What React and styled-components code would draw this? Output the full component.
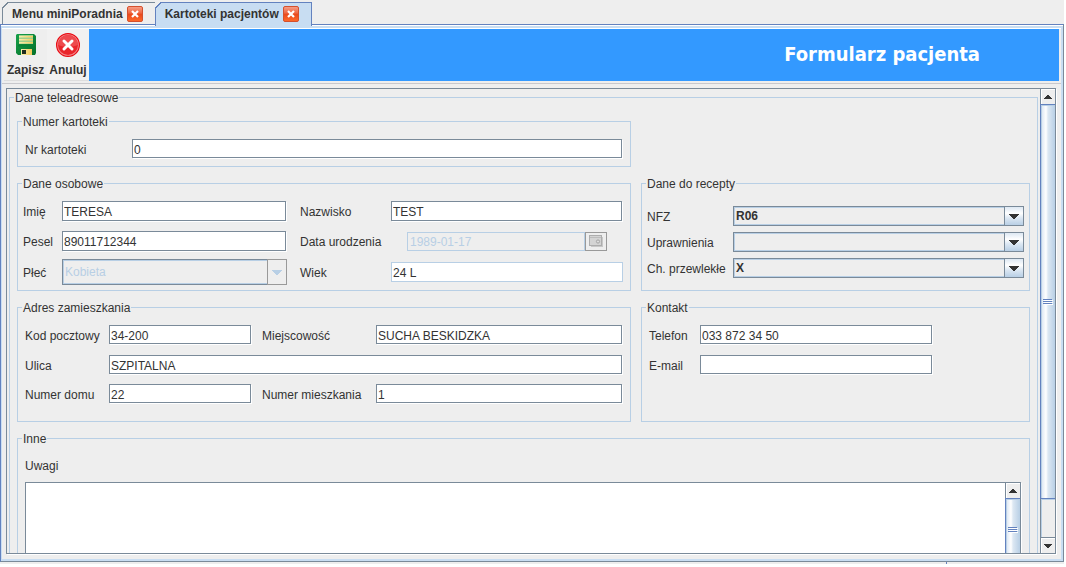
import React from "react";
import styled, { createGlobalStyle, css } from "styled-components";

const c = {
  bg: "#eeeeee",
  text: "#333333",
  shadow: "#7a8a99",
  primary: "#6382bf",
  soft: "#b8cfe5",
  selected: "#c8ddf2",
};

const GlobalStyle = createGlobalStyle`
  * { box-sizing: border-box; }
  body {
    margin: 0;
    background: #fff;
    color: ${c.text};
    font: 12px/15px "Liberation Sans", Arial, sans-serif;
  }
  button, input, select, textarea { font: inherit; color: inherit; margin: 0; border-radius: 0; outline: none; }
`;

const Page = styled.div`
  height: 100vh;
  padding: 0 2px 3px 0;
`;

const Window = styled.div`
  height: 100%;
  display: flex;
  flex-direction: column;
  background: ${c.bg};
`;

/* Tabs */
const TabBar = styled.nav`
  display: flex;
  height: 24px;
  padding: 2px 2px 0;
`;

const Tab = styled.div`
  --line: ${(p) => (p.$active ? c.primary : c.shadow)};
  --fill: ${(p) => (p.$active ? c.selected : c.bg)};
  position: relative;
  display: flex;
  align-items: center;
  gap: 4px;
  height: ${(p) => (p.$active ? 24 : 22)}px;
  padding: 1px 12px ${(p) => (p.$active ? 2 : 0)}px 9px;
  border: 1px solid var(--line);
  border-bottom: 0;
  border-right-color: ${c.primary};
  border-right-width: ${(p) => (p.$active ? 1 : 0)}px;
  background: var(--fill);
  z-index: ${(p) => (p.$active ? 1 : 0)};

  &::before {
    content: "";
    position: absolute;
    top: -1px;
    left: -1px;
    width: 7px;
    height: 7px;
    background: linear-gradient(135deg, ${c.bg} 0 4px, var(--line) 4px 5px, var(--fill) 5px);
  }
`;

const TabName = styled.button`
  padding: 0;
  border: 0;
  background: none;
  font-weight: bold;
  white-space: nowrap;
`;

const CloseButton = styled.button`
  display: flex;
  width: 16px;
  height: 16px;
  padding: 0;
  border: 0;
  background: none;
`;

/* Frame */
const Frame = styled.main`
  flex: 1;
  min-height: 0;
  display: flex;
  border: 1px solid ${c.shadow};
  border-top-color: ${c.primary};
  border-left-color: ${c.primary};
  padding-top: 1px;
  background: #fff;
`;

const Pane = styled.div`
  flex: 1;
  min-width: 0;
  display: flex;
  flex-direction: column;
  border: 2px solid ${c.selected};
  border-left-width: 1px;
  background: ${c.bg};
`;

const Toolbar = styled.header`
  display: flex;
  height: 56px;
  padding: 0 2px 2px;
  border-top: 1px solid #fff;
  border-bottom: 1px solid #c8c8cc;
`;

const ToolButton = styled.button`
  display: flex;
  flex-direction: column;
  align-items: center;
  justify-content: space-between;
  padding: 4px ${(p) => (p.$light ? 2 : 3)}px 2px;
  border: 0;
  border-bottom: 1px solid #dddddd;
  background: ${(p) => (p.$light ? "#f1f1f1" : c.bg)};
  font-weight: bold;
`;

const Banner = styled.h1`
  flex: 1;
  margin: 0;
  padding-right: 79px;
  background: #3399ff;
  color: #fff;
  font: bold 20px/50px "DejaVu Sans Condensed", "DejaVu Sans", sans-serif;
  text-align: right;
`;

/* Scrolling */
const ScrollPane = styled.div`
  flex: 1;
  min-height: 0;
  display: flex;
  margin: 4px 5px 5px 4px;
  border: 1px solid ${c.shadow};
  box-shadow: 1px 1px 0 #fff;
`;

const Viewport = styled.div`
  flex: 1;
  min-width: 0;
  padding: 1px 2px;
  overflow-y: auto;
  scrollbar-width: none;
`;

const Bar = styled.div`
  display: flex;
  flex-direction: column;
  width: 15px;
  border-left: 1px solid ${c.shadow};
`;

const BarButton = styled.button`
  display: flex;
  align-items: center;
  justify-content: center;
  height: ${(p) => (p.$down ? 16 : 15)}px;
  padding: 0;
  border: 0;
  ${(p) => p.$down && css`border-top: 1px solid ${c.shadow};`}
  background: ${c.bg};
  box-shadow: inset 1px 1px 0 #fff;
`;

const Thumb = styled.div`
  flex: ${(p) => p.$size};
  display: flex;
  align-items: center;
  justify-content: center;
  margin-left: -1px;
  border: solid ${c.primary};
  border-width: 1px 0 1px 1px;
  background: linear-gradient(90deg, ${c.soft} 0 1px, #dfe9f4 1px, #fff 5px, #dde8f3 7px, ${c.soft} 100%);
  box-shadow: inset 0 1px 0 ${c.soft};
`;

const Track = styled.div`
  flex: ${(p) => p.$size};
  box-shadow: inset 1px 1px 0 ${c.soft};
`;

/* Groups */
const Group = styled.fieldset`
  min-width: 0;
  margin: 0;
  padding: 0 4px;
  border: 1px solid ${c.soft};
`;

const Legend = styled.legend`
  height: 15px;
  padding: 0 1px;
  line-height: 17px;
`;

const Sections = styled.div`
  display: grid;
  grid-template-columns: minmax(0, 614fr) minmax(0, 389fr);
  grid-template-rows: 53px 115px 122px auto;
  gap: 9px 10px;
  padding: 9px 3px 8px;

  > :first-child { grid-column: 1; }
  > :nth-child(2) { grid-column: 1; }
  > :last-child { grid-column: 1 / -1; }
`;

const Fields = styled.div`
  display: grid;
  align-items: center;
  grid-template-columns: ${(p) => p.$cols};
  grid-template-rows: ${(p) => p.$rows};
  padding: ${(p) => p.$pad};
`;

const Label = styled.label`
  padding-top: 2px;
  padding-left: ${(p) => p.$indent || 0}px;
  white-space: nowrap;
`;

const Input = styled.input`
  width: calc(100% - 1px);
  min-width: 0;
  height: ${(p) => (p.$tall ? 20 : 19)}px;
  margin-bottom: ${(p) => (p.$tall ? 0 : 1)}px;
  padding: ${(p) => (p.$tall ? 1 : 2)}px 1px 0;
  border: 1px solid ${c.shadow};
  background: #fff;
  box-shadow: 1px 1px 0 #fff;
  grid-column: ${(p) => (p.$wide ? "2 / -1" : "auto")};

  &:read-only {
    width: 100%;
    border-color: ${c.soft};
    box-shadow: none;
  }
  &:disabled {
    flex: 1;
    margin-bottom: 0;
    padding-left: 2px;
    background: ${c.bg};
    color: ${c.soft};
  }
`;

const DateBox = styled.div`
  display: flex;
  padding: 0 16px;
`;

const DateButton = styled.button`
  display: flex;
  align-items: center;
  justify-content: center;
  width: 22px;
  height: 19px;
  padding: 0;
  border: 1px solid #999999;
  background: ${c.bg};
`;

const ComboBox = styled.div`
  position: relative;
  display: flex;
  height: ${(p) => (p.$tall ? 26 : 20)}px;
`;

const Select = styled.select`
  appearance: none;
  width: 100%;
  padding: 0 22px 0 2px;
  border: 1px solid ${c.shadow};
  background: ${c.bg};
  box-shadow: inset 0 0 0 1px ${c.soft};
  font-weight: bold;

  &:disabled {
    opacity: 1;
    color: ${c.soft};
    font-weight: normal;
  }
`;

const ComboArrow = styled.span`
  position: absolute;
  inset: 0 0 0 auto;
  width: 20px;
  display: flex;
  align-items: center;
  justify-content: center;
  pointer-events: none;
  border: 1px solid ${(p) => (p.$off ? "#999999" : c.shadow)};
  color: ${(p) => (p.$off ? c.soft : c.text)};
  background: ${(p) => (p.$off ? c.bg : `linear-gradient(#dde8f3, #fff 35%, #dde8f3 60%, ${c.soft})`)};
`;

const Notes = styled.div`
  display: flex;
  flex-direction: column;
  gap: 8px;
  padding: 11px 4px 8px 3px;
`;

const NotesPane = styled.div`
  display: flex;
  height: 96px;
  border: 1px solid ${c.shadow};
  box-shadow: 1px 1px 0 #fff;
`;

const NotesArea = styled.textarea`
  flex: 1;
  min-width: 0;
  padding: 1px;
  border: 0;
  resize: none;
  overflow: hidden;
  background: #fff;
`;

const BottomStrip = styled.footer`
  display: grid;
  grid-template-columns: 947fr 117fr;
  height: 2px;

  > :first-child { border-right: 1px solid ${c.primary}; }
`;

/* Icons */
const Triangle = ({ up, size = 8 }) => (
  <svg width={size} height={size / 2} viewBox="0 0 8 4" shapeRendering="crispEdges" aria-hidden="true">
    <path d={up ? "M3 0h2v1h1v1h1v1h1v1H0V3h1V2h1V1h1z" : "M0 0h8v1H7v1H6v1H5v1H3V3H2V2H1V1H0z"} fill="currentColor" />
  </svg>
);

const ComboTriangle = () => (
  <svg width="10" height="5" viewBox="0 0 10 5" shapeRendering="crispEdges" aria-hidden="true">
    <path d="M0 0h10v1H9v1H8v1H7v1H6v1H4V4H3V3H2V2H1V1H0z" fill="currentColor" />
  </svg>
);

const Grip = () => (
  <svg width="10" height="6" viewBox="0 0 10 6" shapeRendering="crispEdges" aria-hidden="true">
    <path d="M1 1h9v1H1zM1 3h9v1H1zM1 5h9v1H1z" fill="#fff" />
    <path d="M0 0h9v1H0zM0 2h9v1H0zM0 4h9v1H0z" fill={c.primary} />
  </svg>
);

const CloseIcon = () => (
  <svg width="16" height="16" viewBox="0 0 16 16" aria-hidden="true">
    <defs>
      <linearGradient id="closeFill" x1="0" y1="0" x2="0" y2="1">
        <stop offset="0" stopColor="#f7a189" />
        <stop offset="0.45" stopColor="#ee6440" />
        <stop offset="0.5" stopColor="#e8481c" />
        <stop offset="1" stopColor="#ff6a2a" />
      </linearGradient>
    </defs>
    <rect x="0.5" y="0.5" width="15" height="15" rx="1.5" fill="url(#closeFill)" stroke="#d4502e" />
    <path d="M5 5l6 6M11 5l-6 6" stroke="#fff" strokeWidth="2.2" />
  </svg>
);

const SaveIcon = () => (
  <svg width="22" height="24" viewBox="0 0 22 24" aria-hidden="true">
    <defs>
      <linearGradient id="saveFill" x1="0" y1="0" x2="1" y2="1">
        <stop offset="0" stopColor="#17a04a" />
        <stop offset="1" stopColor="#05702a" />
      </linearGradient>
      <linearGradient id="savePaper" x1="0" y1="0" x2="1" y2="0">
        <stop offset="0" stopColor="#f7f0b0" />
        <stop offset="1" stopColor="#f4c95a" />
      </linearGradient>
    </defs>
    <path d="M2 1h17l2 2v17l-1 2H3l-2-2V2z" fill="url(#saveFill)" />
    <path d="M4 2h14v9H4z" fill="#9ed08c" />
    <path d="M4 3h14v1.5H4zM4 6h14v1.5H4zM4 9h14v1.5H4z" fill="url(#savePaper)" />
    <path d="M3 11.5h16v2H3z" fill="#078237" />
    <path d="M6 16h11v6H6z" fill="url(#savePaper)" />
    <path d="M7 17h4v4H7z" fill="#1d2d20" />
  </svg>
);

const CancelIcon = () => (
  <svg width="24" height="24" viewBox="0 0 24 24" aria-hidden="true">
    <circle cx="12" cy="12" r="11.4" fill="#f58a8d" stroke="#e80b12" strokeWidth="1.2" />
    <circle cx="12" cy="12" r="10" fill="#e9252b" />
    <path d="M2 12a10 10 0 0 1 20 0q-10 4-20 0z" fill="#ee4a4e" />
    <path d="M8 8l8 8M16 8l-8 8" stroke="#fff" strokeWidth="3" strokeLinecap="round" />
  </svg>
);

const CalendarIcon = () => (
  <svg width="14" height="12" viewBox="0 0 14 12" aria-hidden="true">
    <path d="M2 2h12v10H2z" fill="#c8c8c8" />
    <rect x="0.5" y="0.5" width="12" height="10" fill="#d4d4d4" stroke="#adadad" />
    <path d="M1 2.5h11" stroke="#bcbcbc" />
    <circle cx="9" cy="6.5" r="1.6" fill="#dedede" stroke="#a4a4a4" />
  </svg>
);

/* Composed parts */
function Scrollbar({ thumb, track }) {
  return (
    <Bar>
      <BarButton type="button" aria-label="W górę"><Triangle up /></BarButton>
      <Thumb $size={thumb}><Grip /></Thumb>
      {track > 0 && <Track $size={track} />}
      <BarButton type="button" $down aria-label="W dół"><Triangle /></BarButton>
    </Bar>
  );
}

function TextField({ id, label, value = "", indent, ...rest }) {
  return (
    <>
      <Label htmlFor={id} $indent={indent}>{label}</Label>
      <Input id={id} defaultValue={value} {...rest} />
    </>
  );
}

function Combo({ id, label, value, disabled, tall }) {
  return (
    <>
      <Label htmlFor={id}>{label}</Label>
      <ComboBox $tall={tall}>
        <Select id={id} disabled={disabled} defaultValue={value}>
          <option value={value}>{value}</option>
        </Select>
        <ComboArrow $off={disabled}><ComboTriangle /></ComboArrow>
      </ComboBox>
    </>
  );
}

function Section({ title, children }) {
  return (
    <Group>
      <Legend>{title}</Legend>
      {children}
    </Group>
  );
}

function TabItem({ name, active }) {
  return (
    <Tab $active={active}>
      <TabName type="button">{name}</TabName>
      <CloseButton type="button" aria-label={`Zamknij: ${name}`}><CloseIcon /></CloseButton>
    </Tab>
  );
}

export default function App() {
  return (
    <Page>
      <GlobalStyle />
      <Window>
        <TabBar>
          <TabItem name="Menu miniPoradnia" />
          <TabItem name="Kartoteki pacjentów" active />
        </TabBar>
        <Frame>
          <Pane>
            <Toolbar>
              <ToolButton type="button"><SaveIcon />Zapisz</ToolButton>
              <ToolButton type="button" $light><CancelIcon />Anuluj</ToolButton>
              <Banner>Formularz pacjenta</Banner>
            </Toolbar>
            <ScrollPane>
              <Viewport>
                <Section title="Dane teleadresowe">
                  <Sections>
                    <Section title="Numer kartoteki">
                      <Fields $cols="107px minmax(0, 1fr)" $rows="30px" $pad="5px 3px 0">
                        <TextField id="nr" label="Nr kartoteki" value="0" />
                      </Fields>
                    </Section>
                    <Section title="Dane osobowe">
                      <Fields
                        $cols="39px minmax(0, 225fr) 104px minmax(0, 232fr)"
                        $rows="30px 30px 32px"
                        $pad="5px 3px 0 1px"
                      >
                        <TextField id="imie" label="Imię" value="TERESA" $tall />
                        <TextField id="nazwisko" label="Nazwisko" value="TEST" indent={13} $tall />
                        <TextField id="pesel" label="Pesel" value="89011712344" $tall />
                        <Label htmlFor="data" $indent={13}>Data urodzenia</Label>
                        <DateBox>
                          <Input id="data" defaultValue="1989-01-17" disabled />
                          <DateButton type="button" disabled aria-label="Wybierz datę"><CalendarIcon /></DateButton>
                        </DateBox>
                        <Combo id="plec" label="Płeć" value="Kobieta" disabled tall />
                        <TextField id="wiek" label="Wiek" value="24 L" indent={13} readOnly $tall />
                      </Fields>
                    </Section>
                    <Section title="Dane do recepty">
                      <Fields $cols="86px minmax(0, 1fr)" $rows="26px 26px 26px" $pad="12px 1px 0">
                        <Combo id="nfz" label="NFZ" value="R06" />
                        <Combo id="uprawnienia" label="Uprawnienia" value="" />
                        <Combo id="przewlekle" label="Ch. przewlekłe" value="X" />
                      </Fields>
                    </Section>
                    <Section title="Adres zamieszkania">
                      <Fields
                        $cols="84px minmax(0, 143fr) 124px minmax(0, 247fr)"
                        $rows="30px 30px 28px"
                        $pad="5px 3px 0"
                      >
                        <TextField id="kod" label="Kod pocztowy" value="34-200" />
                        <TextField id="miejscowosc" label="Miejscowość" value="SUCHA BESKIDZKA" indent={10} />
                        <TextField id="ulica" label="Ulica" value="SZPITALNA" $wide />
                        <TextField id="dom" label="Numer domu" value="22" />
                        <TextField id="mieszkanie" label="Numer mieszkania" value="1" indent={10} />
                      </Fields>
                    </Section>
                    <Section title="Kontakt">
                      <Fields
                        $cols="51px minmax(0, 233fr) minmax(0, 92fr)"
                        $rows="30px 30px"
                        $pad="5px 0 0 3px"
                      >
                        <TextField id="telefon" label="Telefon" value="033 872 34 50" />
                        <span />
                        <TextField id="email" label="E-mail" type="email" />
                      </Fields>
                    </Section>
                    <Section title="Inne">
                      <Notes>
                        <Label htmlFor="uwagi">Uwagi</Label>
                        <NotesPane>
                          <NotesArea id="uwagi" />
                          <Scrollbar thumb={1} track={0} />
                        </NotesPane>
                      </Notes>
                    </Section>
                  </Sections>
                </Section>
              </Viewport>
              <Scrollbar thumb={395} track={38} />
            </ScrollPane>
          </Pane>
        </Frame>
        <BottomStrip><span /><span /></BottomStrip>
      </Window>
    </Page>
  );
}
